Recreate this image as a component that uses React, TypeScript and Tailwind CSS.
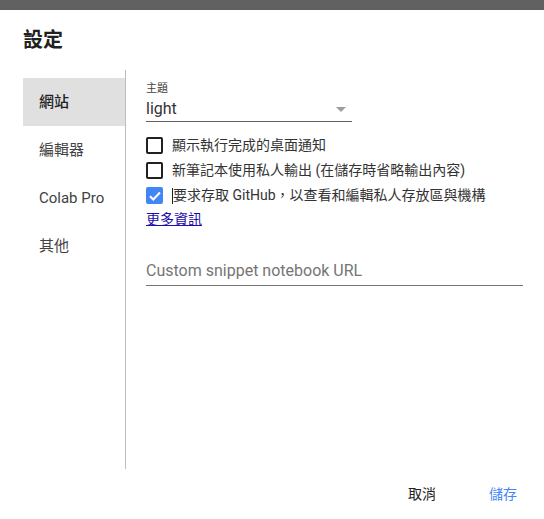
import React, { useState } from 'react';

const FONT = { fontFamily: 'Roboto, "Noto Sans CJK TC", "Noto Sans", sans-serif' };

const tabs = ['網站', '編輯器', 'Colab Pro', '其他'];

function Checkbox({ checked }: { checked: boolean }) {
  if (checked) {
    return (
      <span className="w-[17px] h-[17px] rounded-[2px] bg-[#4285f4] flex items-center justify-center shrink-0">
        <svg width="14" height="14" viewBox="0 0 24 24">
          <path d="M3.5 12.5l5.5 5.5L20.5 6" fill="none" stroke="#fff" strokeWidth="3.5" />
        </svg>
      </span>
    );
  }
  return <span className="w-[17px] h-[17px] rounded-[2px] border-2 border-[#212121] shrink-0" />;
}

export default function App() {
  const [active, setActive] = useState(0);

  const options = [
    { label: '顯示執行完成的桌面通知', checked: false },
    { label: '新筆記本使用私人輸出 (在儲存時省略輸出內容)', checked: false },
    { label: '要求存取 GitHub，以查看和編輯私人存放區與機構', checked: true, caret: true },
  ];

  return (
    <div className="w-[544px] h-[519px] bg-white flex flex-col text-[#212121]" style={FONT}>
      <div className="h-[10px] bg-[#616161]" />

      <h1 className="px-[23px] pt-[18px] text-[20px] leading-[24px] font-bold">設定</h1>

      <div className="flex mt-[18px] h-[399px]">
        {/* Sidebar */}
        <div className="ml-[23px] w-[103px] border-r border-[#bdbdbd] pt-[8px]">
          {tabs.map((t, i) => (
            <button
              key={t}
              onClick={() => setActive(i)}
              className={`w-full h-[48px] flex items-center pl-[16px] text-[15px] text-left ${
                active === i ? 'bg-[#e0e0e0] font-medium' : 'text-[#424242]'
              }`}
            >
              {t}
            </button>
          ))}
        </div>

        {/* Content */}
        <div className="pl-[20px] pt-[12px] flex flex-col">
          <div className="text-[11px] leading-[14px] text-[#424242]">主題</div>
          <div className="w-[206px] h-[26px] border-b border-[#616161] flex items-center justify-between">
            <span className="text-[16px] leading-[20px] text-[#333]">light</span>
            <svg width="10" height="5" viewBox="0 0 10 5" className="mr-[6px] mt-[2px]">
              <path d="M0 0h10L5 5z" fill="#9e9e9e" />
            </svg>
          </div>

          <div className="mt-[11px] flex flex-col">
            {options.map((o) => (
              <label key={o.label} className="h-[25px] flex items-center gap-[9px] text-[14px] text-[#333]">
                <Checkbox checked={o.checked} />
                <span className="flex items-center">
                  {o.caret && <span className="w-px h-[16px] bg-[#212121]" />}
                  {o.label}
                </span>
              </label>
            ))}
          </div>

          <a href="#" className="self-start text-[14px] leading-[18px] text-[#1a0dab] underline mt-[2px]">更多資訊</a>

          <div className="mt-[28px] w-[377px] h-[30px] border-b border-[#757575] flex items-center">
            <span className="text-[16px] text-[#757575]">Custom snippet notebook URL</span>
          </div>
        </div>
      </div>

      <div className="flex justify-end items-center h-[50px] pr-[27px] gap-[53px] text-[14px]">
        <button className="text-[#212121]">取消</button>
        <button className="text-[#4285f4]">儲存</button>
      </div>
    </div>
  );
}
